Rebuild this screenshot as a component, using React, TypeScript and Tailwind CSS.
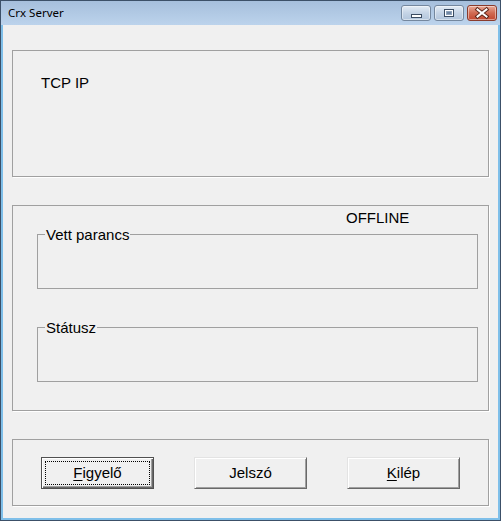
import React from 'react';

const font = { fontFamily: '"Liberation Sans", Arial, sans-serif' };

function CaptionButton({ kind }: { kind: 'min' | 'max' | 'close' }) {
  const face =
    kind === 'close'
      ? 'border-[#8a3b2c] bg-linear-to-b from-[#e9a896] via-[#d06a52] to-[#c3462f]'
      : 'border-[#74879e] bg-linear-to-b from-[#e4ecf5] via-[#c5d4e6] to-[#b2c5dc]';
  return (
    <div className={`w-[30px] h-[16px] rounded-[3px] border ${face} shadow-[inset_0_0_0_1px_rgba(255,255,255,0.45)] flex items-center justify-center`}>
      <svg width="28" height="14" viewBox="0 0 28 14">
        {kind === 'min' && (
          <rect x="9.5" y="8.5" width="10" height="3" fill="#fff" stroke="#3b4c62" />
        )}
        {kind === 'max' && (
          <g>
            <rect x="9.5" y="3.5" width="9" height="7" fill="#8fa3bb" stroke="#3b4c62" />
            <rect x="10.5" y="4.5" width="7" height="5" fill="none" stroke="#fff" />
            <rect x="12" y="6" width="4" height="2" fill="#6f86a3" />
          </g>
        )}
        {kind === 'close' && (
          <g strokeLinecap="square">
            <path d="M9.5 3.5 L18.5 10.5 M18.5 3.5 L9.5 10.5" stroke="#5a2418" strokeWidth="4" />
            <path d="M9.5 3.5 L18.5 10.5 M18.5 3.5 L9.5 10.5" stroke="#fff" strokeWidth="2" />
          </g>
        )}
      </svg>
    </div>
  );
}

function GroupBox({ label, className = '' }: { label: string; className?: string }) {
  return (
    <fieldset className={`h-[63px] border border-[#a0a0a0] px-[7px] ${className}`}>
      <legend className="px-[1px] text-[15px] leading-[17px] text-black">{label}</legend>
    </fieldset>
  );
}

function Button({ children, focused = false }: { children: React.ReactNode; focused?: boolean }) {
  if (focused) {
    return (
      <button className="w-[113px] h-[32px] bg-[#f0f0f0] border border-[#505050] p-[3px] flex shadow-[inset_1px_1px_0_#fff,inset_-1px_-1px_0_#696969,inset_-2px_-2px_0_#a0a0a0]">
        <span className="flex-1 border border-dotted border-black flex items-center justify-center text-[15px] text-black">
          {children}
        </span>
      </button>
    );
  }
  return (
    <button className="w-[113px] h-[32px] bg-[#f0f0f0] border border-t-[#e3e3e3] border-l-[#e3e3e3] border-r-[#696969] border-b-[#696969] shadow-[inset_1px_1px_0_#fff,inset_-1px_-1px_0_#a0a0a0] flex items-center justify-center text-[15px] text-black">
      {children}
    </button>
  );
}

export default function App() {
  return (
    <div className="w-[501px] h-[521px] border border-[#3c5068] bg-[#7fbfe9] flex flex-col" style={font}>
      {/* Title bar */}
      <div className="h-[24px] bg-linear-to-b from-[#a6bfdc] to-[#bcd3ec] flex items-start justify-between">
        <div className="pl-[7px] pt-[5px] text-[11.5px] leading-[14px] text-black" style={{ fontFamily: '"Noto Sans", "DejaVu Sans", sans-serif' }}>
          Crx Server
        </div>
        <div className="flex gap-[3px] pt-[4px] pr-[3px]">
          <CaptionButton kind="min" />
          <CaptionButton kind="max" />
          <CaptionButton kind="close" />
        </div>
      </div>

      {/* Client area */}
      <div className="flex-1 mx-[2px] mb-[2px] bg-[#f0f0f0] px-[9px]">
        <div className="mt-[25px] h-[127px] border border-[#a0a0a0] shadow-[1px_1px_0_#fff] pt-[23px] pl-[28px]">
          <div className="text-[15px] leading-[17px] text-black">TCP IP</div>
        </div>

        <div className="mt-[28px] h-[206px] border border-[#a0a0a0] shadow-[1px_1px_0_#fff] pt-[3px] pl-[24px] pr-[10px]">
          <div className="h-[17px] pl-[309px] text-[15px] leading-[17px] text-black">OFFLINE</div>
          <GroupBox label="Vett parancs" />
          <GroupBox label="Státusz" className="mt-[30px]" />
        </div>

        <div className="mt-[28px] h-[67px] border border-[#a0a0a0] shadow-[1px_1px_0_#fff] pt-[17px] pl-[28px] flex items-start gap-[40px]">
          <Button focused>
            <span className="underline underline-offset-[2px]">F</span>igyelő
          </Button>
          <Button>Jelszó</Button>
          <Button>
            <span className="underline underline-offset-[2px]">K</span>ilép
          </Button>
        </div>
      </div>
    </div>
  );
}
